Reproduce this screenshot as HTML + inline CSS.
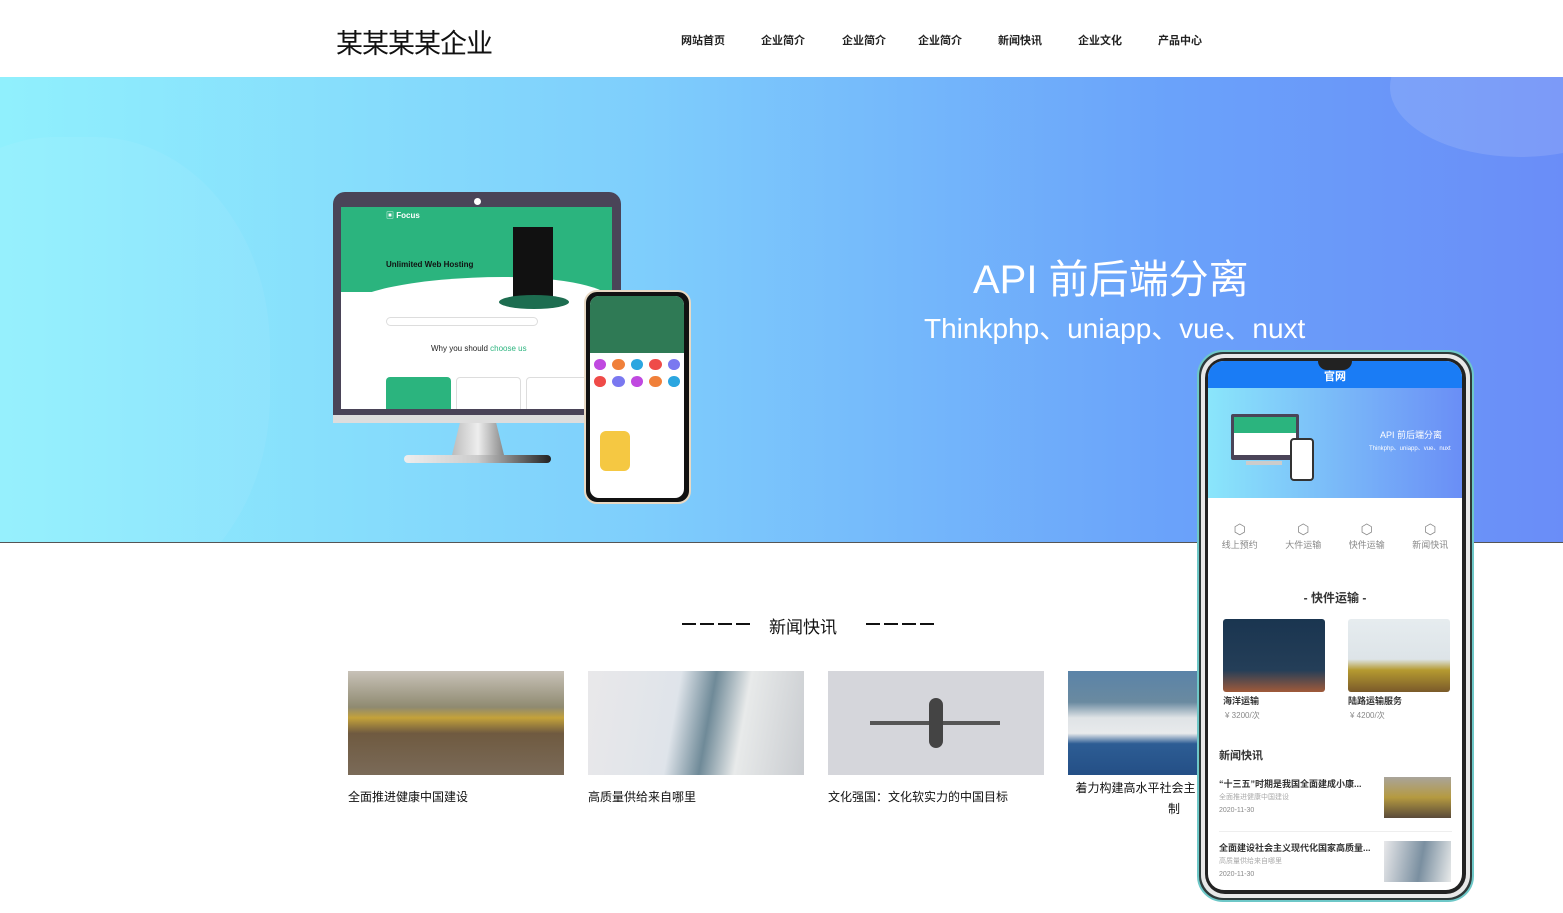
<!DOCTYPE html>
<html><head><meta charset="utf-8"><style>
*{margin:0;padding:0;box-sizing:border-box}
body{width:1563px;height:913px;overflow:hidden;background:#fff;font-family:"Liberation Sans","Noto Sans CJK SC",sans-serif;position:relative}
.abs{position:absolute}
.nav a{position:absolute;top:32px;font-size:11px;font-weight:bold;color:#222;text-decoration:none}
.hero{left:0;top:77px;width:1563px;height:466px;background:linear-gradient(90deg,#90f0fd 0%,#7fcffc 40%,#6aa2fa 75%,#6a8df8 100%);overflow:hidden;border-bottom:1px solid #555}
.card{position:absolute;top:671px;width:216px}
.card .pic{height:104px}
.card p{font-size:12px;color:#111;margin-top:13px}
.dash{position:absolute;top:623px;width:14px;height:2px;background:#111}
</style></head><body>
<div class="abs" style="left:336px;top:22px;font-size:27px;color:#111;letter-spacing:-1px">某某某某企业</div>
<div class="nav">
<a style="left:681px">网站首页</a><a style="left:761px">企业简介</a><a style="left:842px">企业简介</a><a style="left:918px">企业简介</a><a style="left:998px">新闻快讯</a><a style="left:1078px">企业文化</a><a style="left:1158px">产品中心</a>
</div>
<div class="abs hero">
<div class="abs" style="left:-120px;top:60px;width:390px;height:470px;border-radius:45%;background:rgba(255,255,255,0.06)"></div>
<div class="abs" style="left:1390px;top:-60px;width:260px;height:140px;border-radius:50%;background:rgba(255,255,255,0.12)"></div>
<div class="abs" style="left:333px;top:115px;width:288px;height:228px;background:#4a4458;border-radius:12px 12px 0 0"></div>
<div class="abs" style="left:474px;top:121px;width:7px;height:7px;border-radius:50%;background:#fff"></div>
<div class="abs" style="left:341px;top:130px;width:271px;height:202px;background:#fff;overflow:hidden">
 <div class="abs" style="left:0;top:0;width:271px;height:85px;background:#2bb47e"></div>
 <div class="abs" style="left:0;top:70px;width:271px;height:60px;background:#fff;border-radius:60% 40% 0 0"></div>
 <div class="abs" style="left:45px;top:3px;color:#fff;font-size:8px;font-weight:bold">▣ Focus</div>
 <div class="abs" style="left:45px;top:53px;color:#111;font-size:8px;font-weight:bold">Unlimited Web Hosting</div>
 <div class="abs" style="left:172px;top:20px;width:40px;height:74px;background:#111"></div>
 <div class="abs" style="left:158px;top:88px;width:70px;height:14px;border-radius:50%;background:#1d6d50"></div>
 <div class="abs" style="left:45px;top:110px;width:152px;height:9px;border-radius:5px;background:#fff;border:1px solid #ddd"></div>
 <div class="abs" style="left:90px;top:137px;font-size:8px;color:#222">Why you should <span style="color:#2bb47e">choose us</span></div>
 <div class="abs" style="left:45px;top:170px;width:65px;height:40px;background:#2bb47e;border-radius:4px"></div>
 <div class="abs" style="left:115px;top:170px;width:65px;height:40px;border:1px solid #ddd;border-radius:4px"></div>
 <div class="abs" style="left:185px;top:170px;width:65px;height:40px;border:1px solid #ddd;border-radius:4px"></div>
</div>
<div class="abs" style="left:333px;top:338px;width:288px;height:8px;background:#ddd"></div>
<div class="abs" style="left:452px;top:346px;width:52px;height:32px;background:linear-gradient(90deg,#bbb,#eee,#888);clip-path:polygon(15% 0,85% 0,100% 100%,0 100%)"></div>
<div class="abs" style="left:404px;top:378px;width:147px;height:8px;border-radius:4px;background:linear-gradient(90deg,#eee,#ccc,#222)"></div>
<div class="abs" style="left:584px;top:213px;width:107px;height:214px;background:#111;border-radius:13px;border:2px solid #e8d9c4"></div>
<div class="abs" style="left:590px;top:219px;width:94px;height:202px;background:#fff;border-radius:9px;overflow:hidden">
 <div style="height:57px;background:#2f7a55"></div>
 <div style="display:grid;grid-template-columns:repeat(5,1fr);gap:6px;padding:6px 4px">
 <i style="height:11px;border-radius:50%;background:#c049e0"></i><i style="height:11px;border-radius:50%;background:#f0803a"></i><i style="height:11px;border-radius:50%;background:#2ba6e0"></i><i style="height:11px;border-radius:50%;background:#ef4b48"></i><i style="height:11px;border-radius:50%;background:#7a78f0"></i>
 <i style="height:11px;border-radius:50%;background:#ef4b48"></i><i style="height:11px;border-radius:50%;background:#7a78f0"></i><i style="height:11px;border-radius:50%;background:#c049e0"></i><i style="height:11px;border-radius:50%;background:#f0803a"></i><i style="height:11px;border-radius:50%;background:#2ba6e0"></i>
 </div>
 <div class="abs" style="left:10px;top:135px;width:30px;height:40px;background:#f5c842;border-radius:6px"></div>
</div>
<div class="abs" style="left:973px;top:170px;color:#fff;font-size:40px;white-space:nowrap">API 前后端分离</div>
<div class="abs" style="left:924px;top:230px;color:#fff;font-size:28px;white-space:nowrap">Thinkphp、uniapp、vue、nuxt</div>
</div>
<div class="dash" style="left:682px"></div><div class="dash" style="left:700px"></div><div class="dash" style="left:718px"></div><div class="dash" style="left:736px"></div>
<div class="abs" style="left:769px;top:613px;font-size:17px;color:#111">新闻快讯</div>
<div class="dash" style="left:866px"></div><div class="dash" style="left:884px"></div><div class="dash" style="left:902px"></div><div class="dash" style="left:920px"></div>
<div class="card" style="left:348px"><div class="pic" style="background:linear-gradient(180deg,#c8c2b8 0%,#8f8a70 35%,#c4a23a 45%,#6f5a40 60%,#7a6a58 100%)"></div><p>全面推进健康中国建设</p></div>
<div class="card" style="left:588px"><div class="pic" style="background:linear-gradient(100deg,#e9e8ea 0%,#dfe4ea 40%,#6f8a98 55%,#e8eaea 70%,#c9ccd0 100%)"></div><p>高质量供给来自哪里</p></div>
<div class="card" style="left:828px"><div class="pic" style="background:#d5d6db;position:relative"><div class="abs" style="left:42px;top:50px;width:130px;height:4px;background:#555"></div><div class="abs" style="left:101px;top:27px;width:14px;height:50px;border-radius:7px;background:#444"></div></div><p>文化强国：文化软实力的中国目标</p></div>
<div class="card" style="left:1068px;width:130px;overflow:hidden"><div class="pic" style="background:linear-gradient(180deg,#5a83a8 0%,#6a8aa0 30%,#dfe3e6 45%,#e8eaec 60%,#2d5d94 70%,#244f86 100%)"></div><p style="margin-top:4px;text-align:center;white-space:nowrap;margin-left:5px">着力构建高水平社会主</p><p style="margin-top:4px;padding-left:100px">制</p></div>
<div class="abs" style="left:1197px;top:350px;width:277px;height:552px;border-radius:26px;background:#2f3a3a;border:2px solid #6ec8c8"></div>
<div class="abs" style="left:1201px;top:354px;width:269px;height:544px;border-radius:23px;background:#e8e8e8"></div>
<div class="abs" style="left:1205px;top:358px;width:261px;height:536px;border-radius:20px;background:#222"></div>
<div class="abs" style="left:1208px;top:361px;width:254px;height:529px;border-radius:16px;background:#fff;overflow:hidden">
 <div style="height:27px;background:#1a7cf5;color:#fff;font-size:11px;font-weight:bold;text-align:center;line-height:32px">官网</div>
 <div class="abs" style="left:110px;top:0;width:34px;height:9px;background:#222;border-radius:0 0 10px 10px"></div>
 <div style="height:110px;background:linear-gradient(90deg,#8ae6fb,#6a8ef6);position:relative">
  <div class="abs" style="left:23px;top:26px;width:68px;height:46px;background:#4a4458;border-radius:2px"></div>
  <div class="abs" style="left:26px;top:29px;width:62px;height:38px;background:#fff"><div style="height:16px;background:#2bb47e"></div></div>
  <div class="abs" style="left:38px;top:73px;width:36px;height:4px;background:#ccc"></div>
  <div class="abs" style="left:82px;top:50px;width:24px;height:43px;background:#fff;border:2px solid #333;border-radius:4px"></div>
  <div class="abs" style="left:172px;top:40px;color:#fff;font-size:9px">API 前后端分离</div>
  <div class="abs" style="left:161px;top:55px;color:#fff;font-size:6px;white-space:nowrap">Thinkphp、uniapp、vue、nuxt</div>
 </div>
 <div class="abs" style="top:160px;left:0;width:254px;display:flex;justify-content:space-around;font-size:9px;color:#888;text-align:center">
  <div><div style="font-size:14px">⬡</div>线上预约</div><div><div style="font-size:14px">⬡</div>大件运输</div><div><div style="font-size:14px">⬡</div>快件运输</div><div><div style="font-size:14px">⬡</div>新闻快讯</div>
 </div>
 <div class="abs" style="top:228px;width:254px;text-align:center;font-size:12px;font-weight:bold;color:#333">- 快件运输 -</div>
 <div class="abs" style="left:15px;top:258px;width:102px;height:73px;border-radius:3px;background:linear-gradient(180deg,#1a3550,#243e58 70%,#a05a3a)"></div>
 <div class="abs" style="left:140px;top:258px;width:102px;height:73px;border-radius:3px;background:linear-gradient(180deg,#e6ecef 0%,#dde4e8 55%,#b59a30 70%,#7a5a2a)"></div>
 <div class="abs" style="left:15px;top:333px;font-size:9px;font-weight:bold;color:#333">海洋运输</div>
 <div class="abs" style="left:140px;top:333px;font-size:9px;font-weight:bold;color:#333">陆路运输服务</div>
 <div class="abs" style="left:17px;top:349px;font-size:8px;color:#888">¥ 3200/次</div>
 <div class="abs" style="left:142px;top:349px;font-size:8px;color:#888">¥ 4200/次</div>
 <div class="abs" style="left:11px;top:386px;font-size:11px;font-weight:bold;color:#333">新闻快讯</div>
 <div class="abs" style="left:11px;top:416px;font-size:9px;font-weight:bold;color:#333">“十三五”时期是我国全面建成小康...</div>
 <div class="abs" style="left:11px;top:431px;font-size:7px;color:#aaa">全面推进健康中国建设</div>
 <div class="abs" style="left:11px;top:446px;font-size:7px;color:#888">2020-11-30</div>
 <div class="abs" style="left:176px;top:416px;width:67px;height:41px;background:linear-gradient(180deg,#a9a49a,#b59a40 50%,#5a4a3a)"></div>
 <div class="abs" style="left:11px;top:470px;width:233px;height:1px;background:#eee"></div>
 <div class="abs" style="left:11px;top:480px;font-size:9px;font-weight:bold;color:#333">全面建设社会主义现代化国家高质量...</div>
 <div class="abs" style="left:11px;top:495px;font-size:7px;color:#aaa">高质量供给来自哪里</div>
 <div class="abs" style="left:11px;top:510px;font-size:7px;color:#888">2020-11-30</div>
 <div class="abs" style="left:176px;top:480px;width:67px;height:41px;background:linear-gradient(100deg,#e8e8ea,#7a8fa0 55%,#e8eaea)"></div>
</div>
</body></html>
